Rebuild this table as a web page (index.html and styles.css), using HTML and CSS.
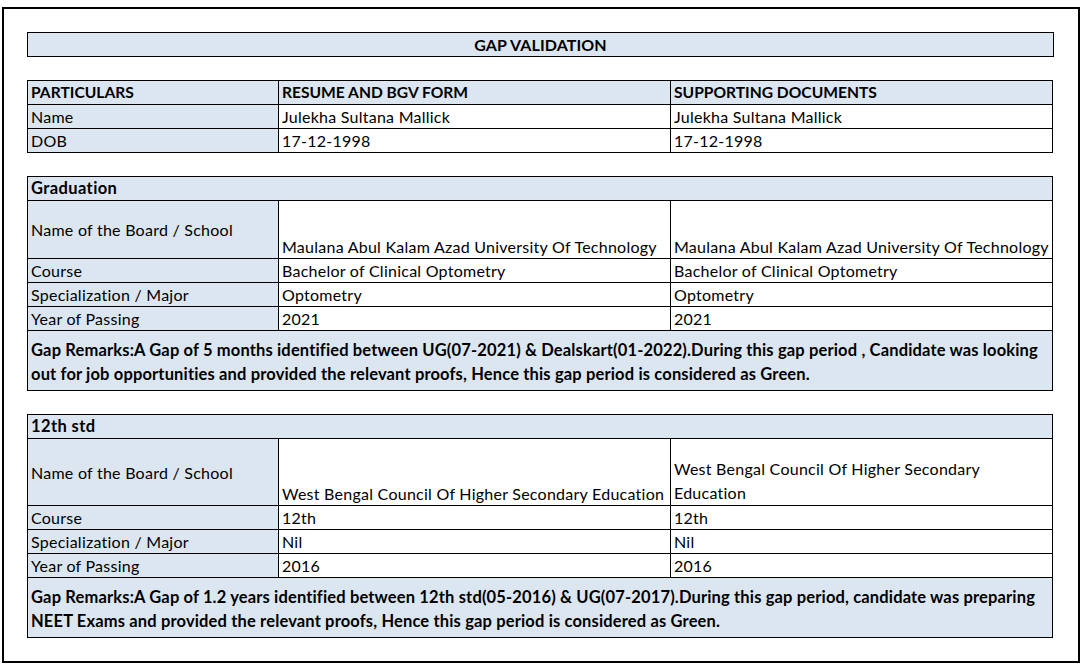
FILE: index.html
```html
<!DOCTYPE html>
<html lang="en">
<head>
<meta charset="utf-8">
<title>Gap Validation</title>
<link rel="stylesheet" href="styles.css">
</head>
<body>
<div class="sheet">
  <div class="title">GAP VALIDATION</div>

  <table class="grid">
    <colgroup><col class="c1"><col class="c2"><col class="c3"></colgroup>
    <tr class="head"><th>PARTICULARS</th><th>RESUME AND BGV FORM</th><th>SUPPORTING DOCUMENTS</th></tr>
    <tr><td class="label">Name</td><td>Julekha Sultana Mallick</td><td>Julekha Sultana Mallick</td></tr>
    <tr><td class="label">DOB</td><td>17-12-1998</td><td>17-12-1998</td></tr>
  </table>

  <table class="grid">
    <colgroup><col class="c1"><col class="c2"><col class="c3"></colgroup>
    <tr class="head"><th class="section" colspan="3">Graduation</th></tr>
    <tr class="board board-grad"><td class="label mid">Name of the Board / School</td><td>Maulana Abul Kalam Azad University Of Technology</td><td>Maulana Abul Kalam Azad University Of Technology</td></tr>
    <tr><td class="label">Course</td><td>Bachelor of Clinical Optometry</td><td>Bachelor of Clinical Optometry</td></tr>
    <tr><td class="label">Specialization / Major</td><td>Optometry</td><td>Optometry</td></tr>
    <tr><td class="label">Year of Passing</td><td>2021</td><td>2021</td></tr>
    <tr><td class="remarks" colspan="3">Gap Remarks:A Gap of 5 months identified between UG(07-2021) &amp; Dealskart(01-2022).During this gap period , Candidate was looking<br>out for job opportunities and provided the relevant proofs, Hence this gap period is considered as Green.</td></tr>
  </table>

  <table class="grid">
    <colgroup><col class="c1"><col class="c2"><col class="c3"></colgroup>
    <tr class="head"><th class="section" colspan="3">12th std</th></tr>
    <tr class="board board-12"><td class="label mid">Name of the Board / School</td><td>West Bengal Council Of Higher Secondary Education</td><td class="two">West Bengal Council Of Higher Secondary<br>Education</td></tr>
    <tr><td class="label">Course</td><td>12th</td><td>12th</td></tr>
    <tr><td class="label">Specialization / Major</td><td>Nil</td><td>Nil</td></tr>
    <tr><td class="label">Year of Passing</td><td>2016</td><td>2016</td></tr>
    <tr><td class="remarks" colspan="3">Gap Remarks:A Gap of 1.2 years identified between 12th std(05-2016) &amp; UG(07-2017).During this gap period, candidate was preparing<br>NEET Exams and provided the relevant proofs, Hence this gap period is considered as Green.</td></tr>
  </table>
</div>
</body>
</html>
```
FILE: styles.css
```css
body {
  margin: 0;
  font-family: Lato, "Open Sans", sans-serif;
  font-size: 16px;
  color: #000;
  background: #fff;
}

.sheet {
  margin: 7px 0 0 2px;
  width: 1078px;
  box-sizing: border-box;
  border: 2px solid #000;
  padding: 23px 24px 23px 23px;
  display: flex;
  flex-direction: column;
  gap: 23px;
}

.title {
  border: 1px solid #000;
  background: #dce6f1;
  height: 23px;
  line-height: 23px;
  text-align: center;
  font-weight: 700;
  font-size: 16px;
  letter-spacing: 0.1px;
}

.grid {
  border-collapse: separate;
  border-spacing: 0;
  table-layout: fixed;
  width: 1026px;
  border-top: 1px solid #000;
  border-left: 1px solid #000;
}

.c1 { width: 251px; }
.c2 { width: 392px; }
.c3 { width: 382px; }

.grid th,
.grid td {
  box-sizing: border-box;
  border-right: 1px solid #000;
  border-bottom: 1px solid #000;
  padding: 0 3px;
  line-height: 23px;
  text-align: left;
  white-space: nowrap;
  overflow: hidden;
  vertical-align: bottom;
  letter-spacing: 0.25px;
}

.grid th {
  background: #dce6f1;
  font-weight: 700;
  font-size: 15.6px;
  letter-spacing: 0;
}

.grid th.section {
  font-size: 16.5px;
  letter-spacing: 0.4px;
}

.grid td.label {
  background: #dce6f1;
}

.grid td.mid {
  vertical-align: middle;
}

.board-grad td { height: 58px; }
.board-12 td { height: 67px; }

.grid td.two {
  line-height: 24px;
}

.grid td.remarks {
  background: #dce6f1;
  font-weight: 700;
  font-size: 16.5px;
  letter-spacing: 0.15px;
  line-height: 24px;
  padding: 7px 3px 4px;
}
```
